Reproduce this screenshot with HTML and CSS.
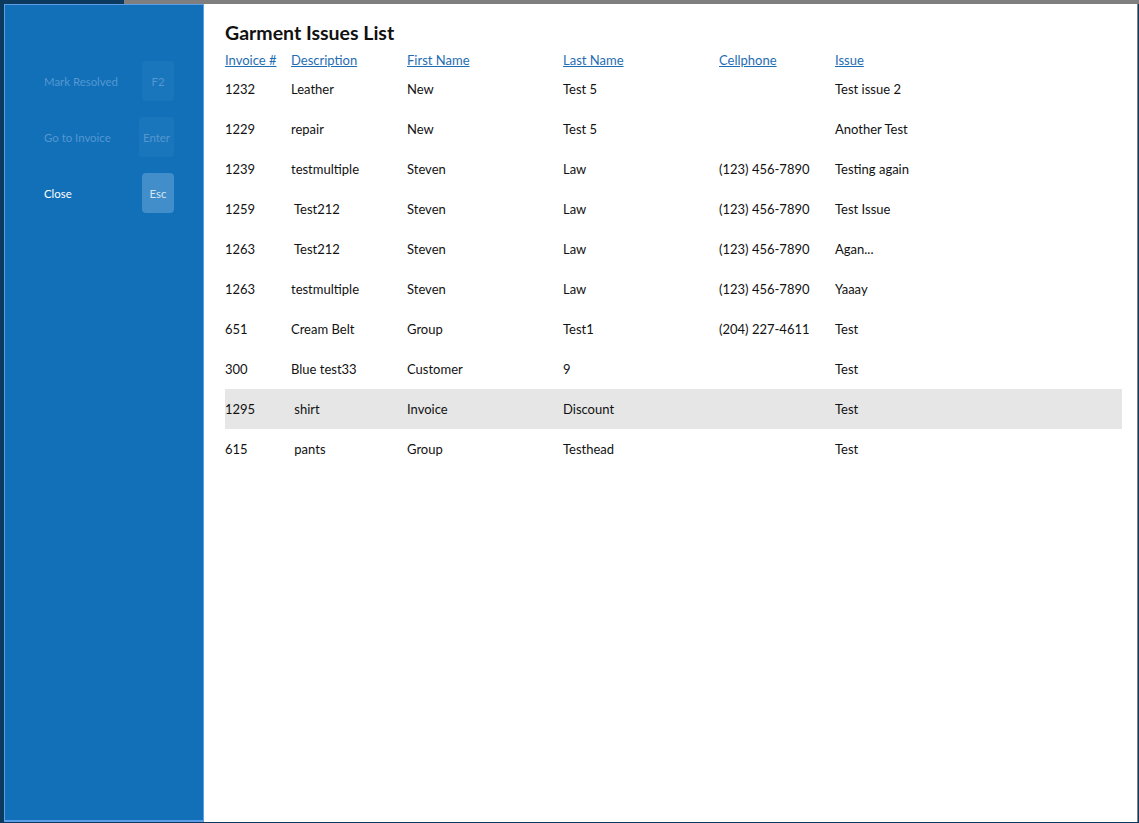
FILE: index.html
```html
<!DOCTYPE html>
<html>
<head>
<meta charset="utf-8">
<link rel="stylesheet" href="styles.css">
</head>
<body>
<div class="topbar"></div>
<div class="modal">
  <aside class="sidebar">
    <div class="action disabled"><span class="label">Mark Resolved</span><span class="key">F2</span></div>
    <div class="action disabled"><span class="label">Go to Invoice</span><span class="key">Enter</span></div>
    <div class="action active"><span class="label">Close</span><span class="key">Esc</span></div>
  </aside>
  <main class="panel">
    <h1 class="title">Garment Issues List</h1>
    <div class="grid head">
      <a>Invoice #</a><a>Description</a><a>First Name</a><a>Last Name</a><a>Cellphone</a><a>Issue</a>
    </div>
    <div class="grid row"><span>1232</span><span>Leather</span><span>New</span><span>Test 5</span><span></span><span>Test issue 2</span></div>
    <div class="grid row"><span>1229</span><span>repair</span><span>New</span><span>Test 5</span><span></span><span>Another Test</span></div>
    <div class="grid row"><span>1239</span><span>testmultiple</span><span>Steven</span><span>Law</span><span>(123) 456-7890</span><span>Testing again</span></div>
    <div class="grid row"><span>1259</span><span>&nbsp;Test212</span><span>Steven</span><span>Law</span><span>(123) 456-7890</span><span>Test Issue</span></div>
    <div class="grid row"><span>1263</span><span>&nbsp;Test212</span><span>Steven</span><span>Law</span><span>(123) 456-7890</span><span>Agan...</span></div>
    <div class="grid row"><span>1263</span><span>testmultiple</span><span>Steven</span><span>Law</span><span>(123) 456-7890</span><span>Yaaay</span></div>
    <div class="grid row"><span>651</span><span>Cream Belt</span><span>Group</span><span>Test1</span><span>(204) 227-4611</span><span>Test</span></div>
    <div class="grid row"><span>300</span><span>Blue test33</span><span>Customer</span><span>9</span><span></span><span>Test</span></div>
    <div class="grid row selected"><span>1295</span><span>&nbsp;shirt</span><span>Invoice</span><span>Discount</span><span></span><span>Test</span></div>
    <div class="grid row"><span>615</span><span>&nbsp;pants</span><span>Group</span><span>Testhead</span><span></span><span>Test</span></div>
  </main>
</div>
</body>
</html>
```
FILE: styles.css
```css
html, body {
  margin: 0;
  padding: 0;
}
body {
  width: 1139px;
  height: 823px;
  overflow: hidden;
  background: #0c3a5e;
  font-family: Lato, "Open Sans", sans-serif;
}
.topbar {
  height: 4px;
  background: linear-gradient(to right, #0c3a5e 0, #0c3a5e 124px, #7f7f7f 124px, #7f7f7f 100%);
}
.modal {
  display: flex;
  margin-left: 4px;
  width: 1134px;
  height: 818px;
}
.sidebar {
  box-sizing: border-box;
  width: 200px;
  flex: none;
  background: #1170b8;
  border: 1px solid #5b9de6;
  border-bottom-width: 2px;
  padding: 56px 29px 0 39px;
  display: flex;
  flex-direction: column;
  gap: 16px;
}
.action {
  display: flex;
  align-items: center;
  justify-content: space-between;
  height: 40px;
  font-size: 11.4px;
}
.action .key {
  box-sizing: border-box;
  min-width: 32px;
  height: 40px;
  padding: 0 4px;
  border-radius: 4px;
  display: flex;
  align-items: center;
  justify-content: center;
  font-size: 11.4px;
}
.action.disabled .label,
.action.disabled .key {
  color: #5597d1;
}
.action.disabled .key {
  background: #1a76bc;
}
.action.active .label {
  color: #ffffff;
}
.action.active .key {
  background: #418ecb;
  color: #d6e6f4;
}
.panel {
  box-sizing: border-box;
  flex: 1;
  background: #ffffff;
  border-right: 1px solid #7f7f7f;
  padding: 15px 15px 0 21px;
}
.title {
  margin: 0;
  font-size: 19.5px;
  font-weight: 700;
  color: #111;
  line-height: 28px;
}
.grid {
  display: grid;
  grid-template-columns: 66px 116px 156px 156px 116px 1fr;
  align-items: center;
  font-size: 13px;
}
.head {
  height: 19px;
  margin-top: 3px;
}
.head a {
  color: #1f6db3;
  text-decoration: underline;
  white-space: nowrap;
}
.row {
  height: 40px;
  color: #111;
  white-space: nowrap;
}
.row.selected {
  background: #e6e6e6;
}
```
